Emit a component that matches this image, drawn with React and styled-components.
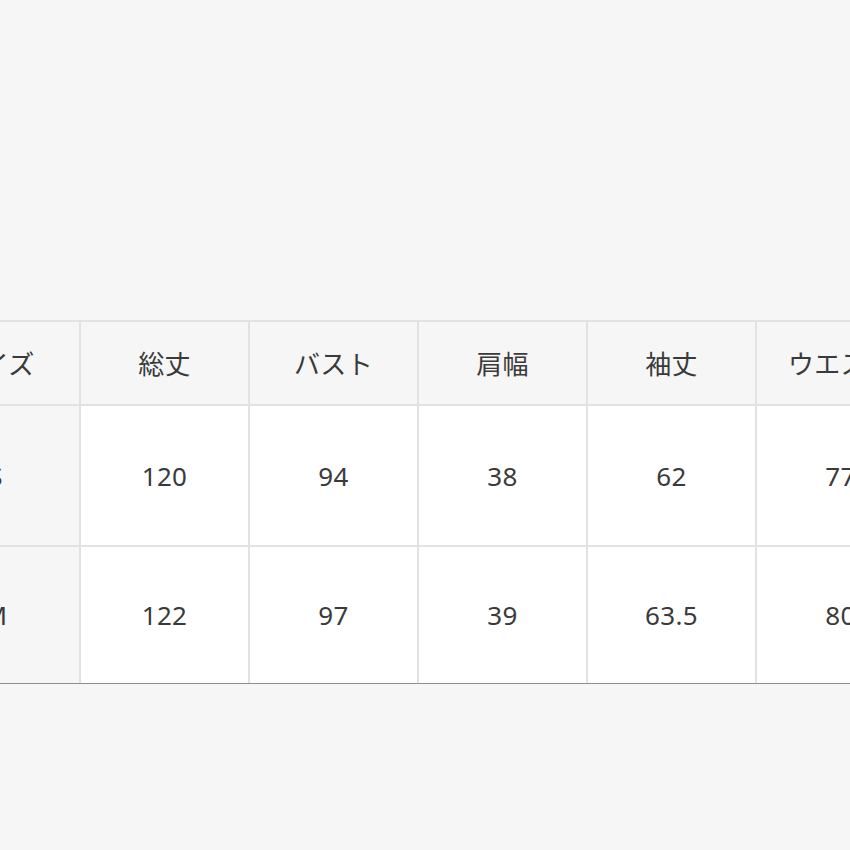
import React from 'react'
import styled, { createGlobalStyle } from 'styled-components'

const GlobalStyle = createGlobalStyle`
  html, body {
    margin: 0;
    padding: 0;
    background: #f6f6f6;
  }
`

const sizes = [
  { size: 'S', values: ['120', '94', '38', '62', '77'] },
  { size: 'M', values: ['122', '97', '39', '63.5', '80'] },
]

const headers = ['サイズ', '総丈', 'バスト', '肩幅', '袖丈', 'ウエスト']

const Page = styled.div`
  height: 850px;
  padding-top: 320px;
  box-sizing: border-box;
  background: #f6f6f6;
  font-family: 'Noto Sans', 'Noto Sans CJK JP', sans-serif;
  color: #3a3a3a;
`

const ScrollArea = styled.div`
  width: 100%;
  overflow: hidden;
  border-bottom: 1px solid #8e8e8e;
`

const Table = styled.table`
  margin-left: -88px;
  border-collapse: separate;
  border-spacing: 0;
  table-layout: fixed;
  width: ${(p) => p.$cols * 169}px;
`

const Cell = styled.td`
  box-sizing: border-box;
  width: 169px;
  padding: 0;
  text-align: center;
  vertical-align: middle;
  font-size: 26px;
  font-weight: 400;
  letter-spacing: 0.3px;
  border-right: 2px solid #e2e2e2;
  border-bottom: ${(p) => (p.$last ? 'none' : '2px solid #e2e2e2')};
  border-top: ${(p) => (p.$head ? '2px solid #e2e2e2' : 'none')};
  background: ${(p) => (p.$head || p.$label ? '#f6f6f6' : '#ffffff')};
  height: ${(p) => p.$h}px;
`

export default function App() {
  return (
    <>
      <GlobalStyle />
      <Page>
        <ScrollArea>
          <Table $cols={headers.length}>
            <thead>
              <tr>
                {headers.map((h) => (
                  <Cell as="th" key={h} $head $h={86}>
                    {h}
                  </Cell>
                ))}
              </tr>
            </thead>
            <tbody>
              {sizes.map((row, i) => {
                const last = i === sizes.length - 1
                const h = last ? 136 : 141
                return (
                  <tr key={row.size}>
                    <Cell $label $h={h} $last={last}>
                      {row.size}
                    </Cell>
                    {row.values.map((v, j) => (
                      <Cell key={j} $h={h} $last={last}>
                        {v}
                      </Cell>
                    ))}
                  </tr>
                )
              })}
            </tbody>
          </Table>
        </ScrollArea>
      </Page>
    </>
  )
}
